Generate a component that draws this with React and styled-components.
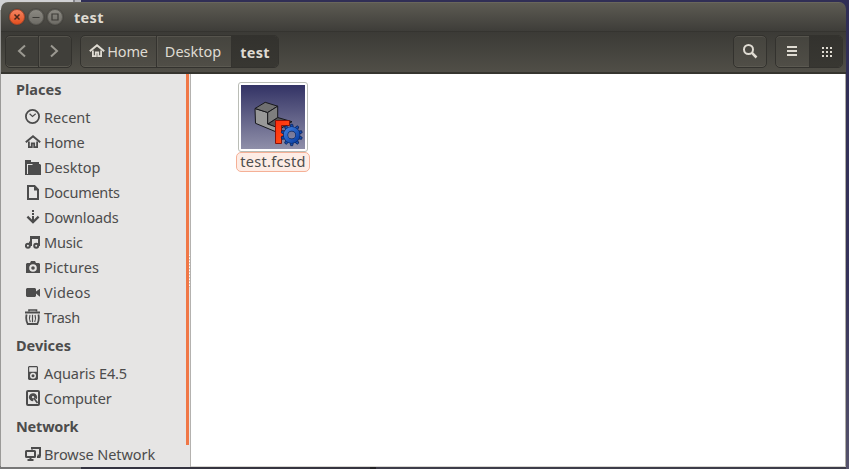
import React from "react";
import styled, { createGlobalStyle } from "styled-components";

const Global = createGlobalStyle`
  * { box-sizing: border-box; }
  body {
    margin: 0;
    overflow: hidden;
    font-family: "Noto Sans", "Open Sans", sans-serif;
    font-size: 14.5px;
    color: #4c4c4c;
  }
`;

const Desktop = styled.div`
  width: 849px;
  height: 469px;
  padding: 2px 3px 2px 1px;
  background:
    linear-gradient(90deg, #d2d2d4 0 73px, #85858b 73px 75px, #b9b9bd 75px 81px, #302e55 81px) 0 0 / 100% 10px no-repeat,
    linear-gradient(90deg, #777 0 81px, #353440 81px 370px, #222226 370px 376px, #3d3c49 376px) 0 100% / 846px 3px no-repeat,
    linear-gradient(#302e55, #35325a 60%, #56536c) 100% 0 / 10px 100% no-repeat,
    #9b9a98;
`;

const Window = styled.div`
  display: flex;
  flex-direction: column;
  height: 465px;
  border-radius: 7px 7px 0 0;
  overflow: hidden;
`;

const TitleBar = styled.header`
  display: flex;
  align-items: center;
  height: 29px;
  padding: 0 0 1px 8px;
  gap: 3px;
  background: linear-gradient(#5d5b53, #3e3d39);
  border-top: 1px solid #69665c;
`;

const WindowButton = styled.span`
  display: flex;
  width: 16px;
  height: 16px;
  border-radius: 50%;
  border: 1px solid ${(p) => (p.$close ? "#a94629" : "#5b5a54")};
  background: ${(p) => (p.$close ? "linear-gradient(#f58461, #e4501f)" : "linear-gradient(#8b8982, #6e6c66)")};
  box-shadow: 0 0 0 1px #3b3a3655;
`;

const Title = styled.h1`
  margin: 0 0 0 8px;
  font-size: 14.5px;
  line-height: 20px;
  letter-spacing: 0.3px;
  color: #dfdbd2;
`;

const Toolbar = styled.div`
  display: flex;
  align-items: flex-start;
  height: 43px;
  padding: 3px 3px 0 4px;
  color: #dfdbd2;
  background: linear-gradient(#3b3a36, #504e47);
  border-top: 1px solid #353430;
  border-bottom: 2px solid #36352f;
`;

const ButtonGroup = styled.div`
  display: flex;
  height: 33px;
  margin-left: ${(p) => p.$gap || 0}px;
  border: 1px solid #33322e;
  border-radius: 5px;
  overflow: hidden;
  background: ${(p) => (p.$flat ? "#403f3a" : "linear-gradient(#45443e, #504e47)")};
  box-shadow: inset 0 1px #56544d, inset 0 -1px #5b5951;
`;

const ToolButton = styled.button`
  display: flex;
  align-items: center;
  justify-content: center;
  width: ${(p) => p.$width}px;
  padding: ${(p) => p.$padding || 0};
  border: 0;
  border-left: ${(p) => (p.$divided ? "1px solid #34332f" : "0")};
  font: inherit;
  line-height: 20px;
  font-weight: ${(p) => (p.$active ? 700 : 400)};
  color: ${(p) => (p.$dim ? "#9b9991" : "#dfdbd2")};
  background: ${(p) => (p.$active ? "linear-gradient(#33322e, #383732)" : "transparent")};
  box-shadow: ${(p) => (p.$divided && !p.$active ? "inset 1px 0 #56544d" : "none")};
`;

const Label = styled.span`
  padding-bottom: ${(p) => p.$lift || 0}px;
  margin-left: ${(p) => p.$indent || 0}px;
  letter-spacing: ${(p) => p.$tracking || 0}px;
`;

const Spacer = styled.div`
  flex: 1;
`;

const Body = styled.div`
  display: flex;
  height: 393px;
`;

const Sidebar = styled.nav`
  width: 185px;
  background: #e6e5e4;
`;

const Splitter = styled.div`
  display: flex;
  align-items: center;
  justify-content: flex-end;
  width: 5px;
  background: linear-gradient(#f07746, #f07746) 0 0 / 3px 371px no-repeat, #e6e5e4;
  border-right: 1px solid #b4b2af;
`;

const Grip = styled.span`
  width: 1px;
  height: 32px;
  background: repeating-linear-gradient(#fff 0 1px, #c4c2be 1px 2px, #e6e5e4 2px 3px);
`;

const Heading = styled.h2`
  display: flex;
  align-items: center;
  height: 31px;
  margin: 0;
  padding: 0 0 2px 15px;
  font-size: 14.5px;
  letter-spacing: ${(p) => p.$tracking || 0}px;
`;

const Place = styled.a`
  display: flex;
  align-items: center;
  height: 25px;
  padding-left: 24px;
  gap: 3px;
  white-space: nowrap;
`;

const Icon = styled.svg`
  display: block;
  flex: none;
  width: 16px;
  height: 16px;
  margin-top: -1px;
`;

const Files = styled.main`
  flex: 1;
  padding: 8px 0 0 45px;
  background: #fff;
  border-right: 1px solid #aeaca4;
  border-bottom: 1px solid #d8d6d1;
`;

const FileItem = styled.figure`
  display: flex;
  flex-direction: column;
  align-items: center;
  width: 74px;
  margin: 0;
`;

const Thumb = styled.div`
  width: 70px;
  height: 70px;
  padding: 2px;
  border: 1px solid #babdb6;
  border-radius: 3px;
  background: #fff;

  svg { display: block; }
`;

const FileName = styled.figcaption`
  width: 74px;
  height: 20px;
  border: 1px solid #f5b096;
  border-radius: 5px;
  background: #fdece5;
  text-align: center;
  line-height: 17px;
  letter-spacing: 0.3px;
`;

const HomeShape = () => (
  <>
    <path d="M.8 8.300 8 2.200l7.200 6.100" fill="none" stroke="currentColor" strokeWidth="2" />
    <path d="M3.900 7.500v5.600h2.900V9.300h2.400v3.800h2.900V7.500" fill="none" stroke="currentColor" strokeWidth="1.800" />
  </>
);

const shapes = {
  recent: (
    <g fill="none" stroke="currentColor">
      <circle cx="7.5" cy="7.5" r="6.6" strokeWidth="1.8" />
      <path d="M4.6 4.7 7.5 7.4l3.2-2.6" strokeWidth="1.2" />
    </g>
  ),
  home: <HomeShape />,
  desktop: (
    <>
      <path d="M0 1h6v2h8v2H2v11H0z" fill="currentColor" />
      <path d="M3 6h4l1-1h7l1 1v10H2V6z" fill="currentColor" />
      <path d="M2.5 15V5.5H7" fill="none" stroke="#e6e5e4" />
    </>
  ),
  documents: (
    <>
      <path d="M3 2h6.5L13 5.6V15H3z" fill="none" stroke="currentColor" strokeWidth="2" />
      <path d="M9 2v4.5h4.5" fill="currentColor" />
    </>
  ),
  downloads: (
    <g fill="none" stroke="currentColor" strokeWidth="2">
      <path d="M8 1v2M8 4v2M8 7v5" />
      <path d="M2.4 7.6 8 13.2l5.6-5.6" strokeWidth="2.3" />
    </g>
  ),
  music: (
    <g fill="none" stroke="currentColor" strokeWidth="2">
      <circle cx="2.9" cy="11.7" r="2" />
      <circle cx="11.2" cy="11.7" r="2" />
      <path d="M5 12V7.5M6 12V3h8v9M6 4h8" />
    </g>
  ),
  pictures: (
    <path
      fill="currentColor"
      fillRule="evenodd"
      d="M2 4h3l1-2h4l1 2h3l1 1v9H1V5zM8 5.2a3.8 3.8 0 1 0 0 7.6 3.8 3.8 0 0 0 0-7.6zm0 2a1.8 1.8 0 1 1 0 3.6 1.8 1.8 0 0 1 0-3.6z"
    />
  ),
  videos: <path fill="currentColor" d="M2 4h8l1 1v2.5L14.500 5H15v7.500h-.5L11 9.500V12l-1 1H2l-1-1V5z" />,
  trash: (
    <g fill="none" stroke="currentColor">
      <path d="M4 2.5V1h7.5v1.5" strokeWidth="1.6" />
      <path d="M0 3.5h15" strokeWidth="2" />
      <path d="M1.600 5.500c-.8 3.500-.5 6.500 1.100 9.500h9.600c1.600-3 1.900-6 1.100-9.500" strokeWidth="1.800" />
      <path d="M5 6c-.8 2.200-.7 4.800.3 7M7.500 5.700v7.500M10 6c.8 2.200.7 4.800-.3 7" strokeWidth="1.200" />
    </g>
  ),
  player: (
    <>
      <path
        fill="currentColor"
        fillRule="evenodd"
        d="M4 1h8l1 1v12l-1 1H4l-1-1V2zM4.2 2.3V6.7h7.6V2.3zM8 7.8a3 3 0 1 0 0 6 3 3 0 0 0 0-6z"
      />
      <circle cx="8" cy="10.8" r="1.5" fill="currentColor" />
    </>
  ),
  computer: (
    <>
      <rect x="2" y="1" width="12" height="14" rx="1" fill="none" stroke="currentColor" strokeWidth="2" />
      <path d="M3.8 7.2a4.2 4.2 0 1 1 8 2L9 7.4l-.9 3.8C5.7 11.2 4 9.5 3.8 7.2z" fill="currentColor" />
      <path d="m8.8 8 3.7 5" stroke="currentColor" strokeWidth="1.7" />
      <circle cx="8" cy="7.2" r="1.1" fill="#e6e5e4" />
    </>
  ),
  network: (
    <g fill="none" stroke="currentColor" strokeWidth="2">
      <path d="M7 3.5V2h8v7.5h-2.5" />
      <rect x="1" y="5" width="9" height="6" rx=".5" />
      <path d="M5.5 11v2.5M2.5 14h6M12 11h3.500" />
    </g>
  ),
};

const sections = [
  {
    title: "Places",
    items: [
      ["recent", "Recent", 0],
      ["home", "Home", -0.2],
      ["desktop", "Desktop", 0],
      ["documents", "Documents", -0.28],
      ["downloads", "Downloads", -0.15],
      ["music", "Music", -0.2],
      ["pictures", "Pictures", 0.05],
      ["videos", "Videos", 0.22],
      ["trash", "Trash", -0.2],
    ],
  },
  {
    title: "Devices",
    items: [
      ["player", "Aquaris E4.5", -0.1],
      ["computer", "Computer", -0.15],
    ],
  },
  { title: "Network", tracking: -0.2, items: [["network", "Browse Network", -0.08]] },
];

const gearTeeth = Array.from({ length: 10 }, (_, i) => i * 36);

const ModelPreview = () => (
  <svg width="64" height="64" viewBox="0 0 64 64">
    <defs>
      <linearGradient id="sky" x1="0" y1="0" x2="0" y2="1">
        <stop offset="0" stopColor="#333365" />
        <stop offset="1" stopColor="#8f8fa9" />
      </linearGradient>
      <linearGradient id="letter" x1="0" y1="0" x2="1" y2="1">
        <stop offset="0" stopColor="#ff2a0a" />
        <stop offset="1" stopColor="#ff5a1c" />
      </linearGradient>
      <linearGradient id="gear" x1="0" y1="0" x2="1" y2="1">
        <stop offset="0" stopColor="#3f7ddb" />
        <stop offset="1" stopColor="#0a3fa5" />
      </linearGradient>
    </defs>
    <rect width="64" height="64" fill="url(#sky)" />
    <g stroke="#17171c" strokeWidth="1" strokeLinejoin="round">
      <path d="m27 39 9.700-6.500L51 36.700 39 44z" fill="#555" />
      <path d="m14 23.500 12.700 4V39L39 43.500v5L14.500 38.300z" fill="#989898" />
      <path d="m14 23.500 10.200-6.200 12.500 3.900-10 6.300z" fill="#707070" />
      <path d="m26.700 27.500 10-6.300v11.300l-10 6.500z" fill="#7e7e7e" />
    </g>
    <path d="M34.500 35.500h14v5h-8v5.500h6v5h-6v7.500h-6z" fill="url(#letter)" stroke="#8b1208" />
    <g fill="#174db0" stroke="#07245f" strokeWidth=".8">
      {gearTeeth.map((angle) => (
        <path key={angle} d="m49 42.500.7-3.200h2l.7 3.200z" transform={`rotate(${angle} 50.700 50)`} />
      ))}
    </g>
    <circle cx="50.700" cy="50" r="6.100" fill="none" stroke="#07245f" strokeWidth="5" />
    <circle cx="50.700" cy="50" r="6.100" fill="none" stroke="url(#gear)" strokeWidth="3.800" />
  </svg>
);

export default function App() {
  return (
    <Desktop>
      <Global />
      <Window>
        <TitleBar>
          <WindowButton $close>
            <svg width="14" height="14"><path d="m4.500 4.500 5 5m0-5-5 5" stroke="#4a271b" strokeWidth="1.500" /></svg>
          </WindowButton>
          <WindowButton>
            <svg width="14" height="14"><path d="M3.500 7.500h7" stroke="#3c3b37" strokeWidth="1.200" /></svg>
          </WindowButton>
          <WindowButton>
            <svg width="14" height="14"><path d="M4 4h6v6H4z" fill="none" stroke="#3c3b37" strokeWidth="1.200" /></svg>
          </WindowButton>
          <Title>test</Title>
        </TitleBar>
        <Toolbar>
          <ButtonGroup $flat>
            <ToolButton $width={32} $dim aria-label="Back">
              <Icon viewBox="0 0 16 16"><path d="m11 2.500-6 5.500 6 5.500" fill="none" stroke="currentColor" strokeWidth="2" /></Icon>
            </ToolButton>
            <ToolButton $width={33} $divided $dim $padding="0 2px 0 0" aria-label="Forward">
              <Icon viewBox="0 0 16 16"><path d="m5 2.500 6 5.500-6 5.500" fill="none" stroke="currentColor" strokeWidth="2" /></Icon>
            </ToolButton>
          </ButtonGroup>
          <ButtonGroup $gap={8}>
            <ToolButton $width={75}>
              <Icon viewBox="0 0 16 16"><HomeShape /></Icon>
              <Label $lift={2} $indent={2} $tracking={-0.2}>Home</Label>
            </ToolButton>
            <ToolButton $width={75} $divided $padding="0 2px 0 0">
              <Label $lift={2}>Desktop</Label>
            </ToolButton>
            <ToolButton $width={47} $divided $active>
              <Label $tracking={0.25}>test</Label>
            </ToolButton>
          </ButtonGroup>
          <Spacer />
          <ButtonGroup>
            <ToolButton $width={32} aria-label="Search">
              <Icon viewBox="0 0 16 16">
                <g fill="none" stroke="currentColor">
                  <circle cx="6.500" cy="6.500" r="4.500" strokeWidth="2" />
                  <path d="m9.700 9.700 4.800 4.800" strokeWidth="2.500" />
                </g>
              </Icon>
            </ToolButton>
          </ButtonGroup>
          <ButtonGroup $gap={8}>
            <ToolButton $width={33} $padding="0 1px 0 0" aria-label="List view">
              <Icon viewBox="0 0 16 16"><path d="M3 4h10M3 8h10M3 12h10" stroke="currentColor" strokeWidth="2" /></Icon>
            </ToolButton>
            <ToolButton $width={33} $divided $active $padding="0 0 0 2px" aria-label="Grid view">
              <Icon viewBox="0 0 16 16">
                <path d="M3 5h10M3 9h10M3 13h10" stroke="currentColor" strokeWidth="2" strokeDasharray="2 2" />
              </Icon>
            </ToolButton>
          </ButtonGroup>
        </Toolbar>
        <Body>
          <Sidebar>
            {sections.map((section) => (
              <React.Fragment key={section.title}>
                <Heading $tracking={section.tracking}>{section.title}</Heading>
                {section.items.map(([icon, label, tracking]) => (
                  <Place key={label}>
                    <Icon viewBox="0 0 16 16">{shapes[icon]}</Icon>
                    <Label $lift={2} $tracking={tracking}>{label}</Label>
                  </Place>
                ))}
              </React.Fragment>
            ))}
          </Sidebar>
          <Splitter><Grip /></Splitter>
          <Files>
            <FileItem>
              <Thumb><ModelPreview /></Thumb>
              <FileName>test.fcstd</FileName>
            </FileItem>
          </Files>
        </Body>
      </Window>
    </Desktop>
  );
}
